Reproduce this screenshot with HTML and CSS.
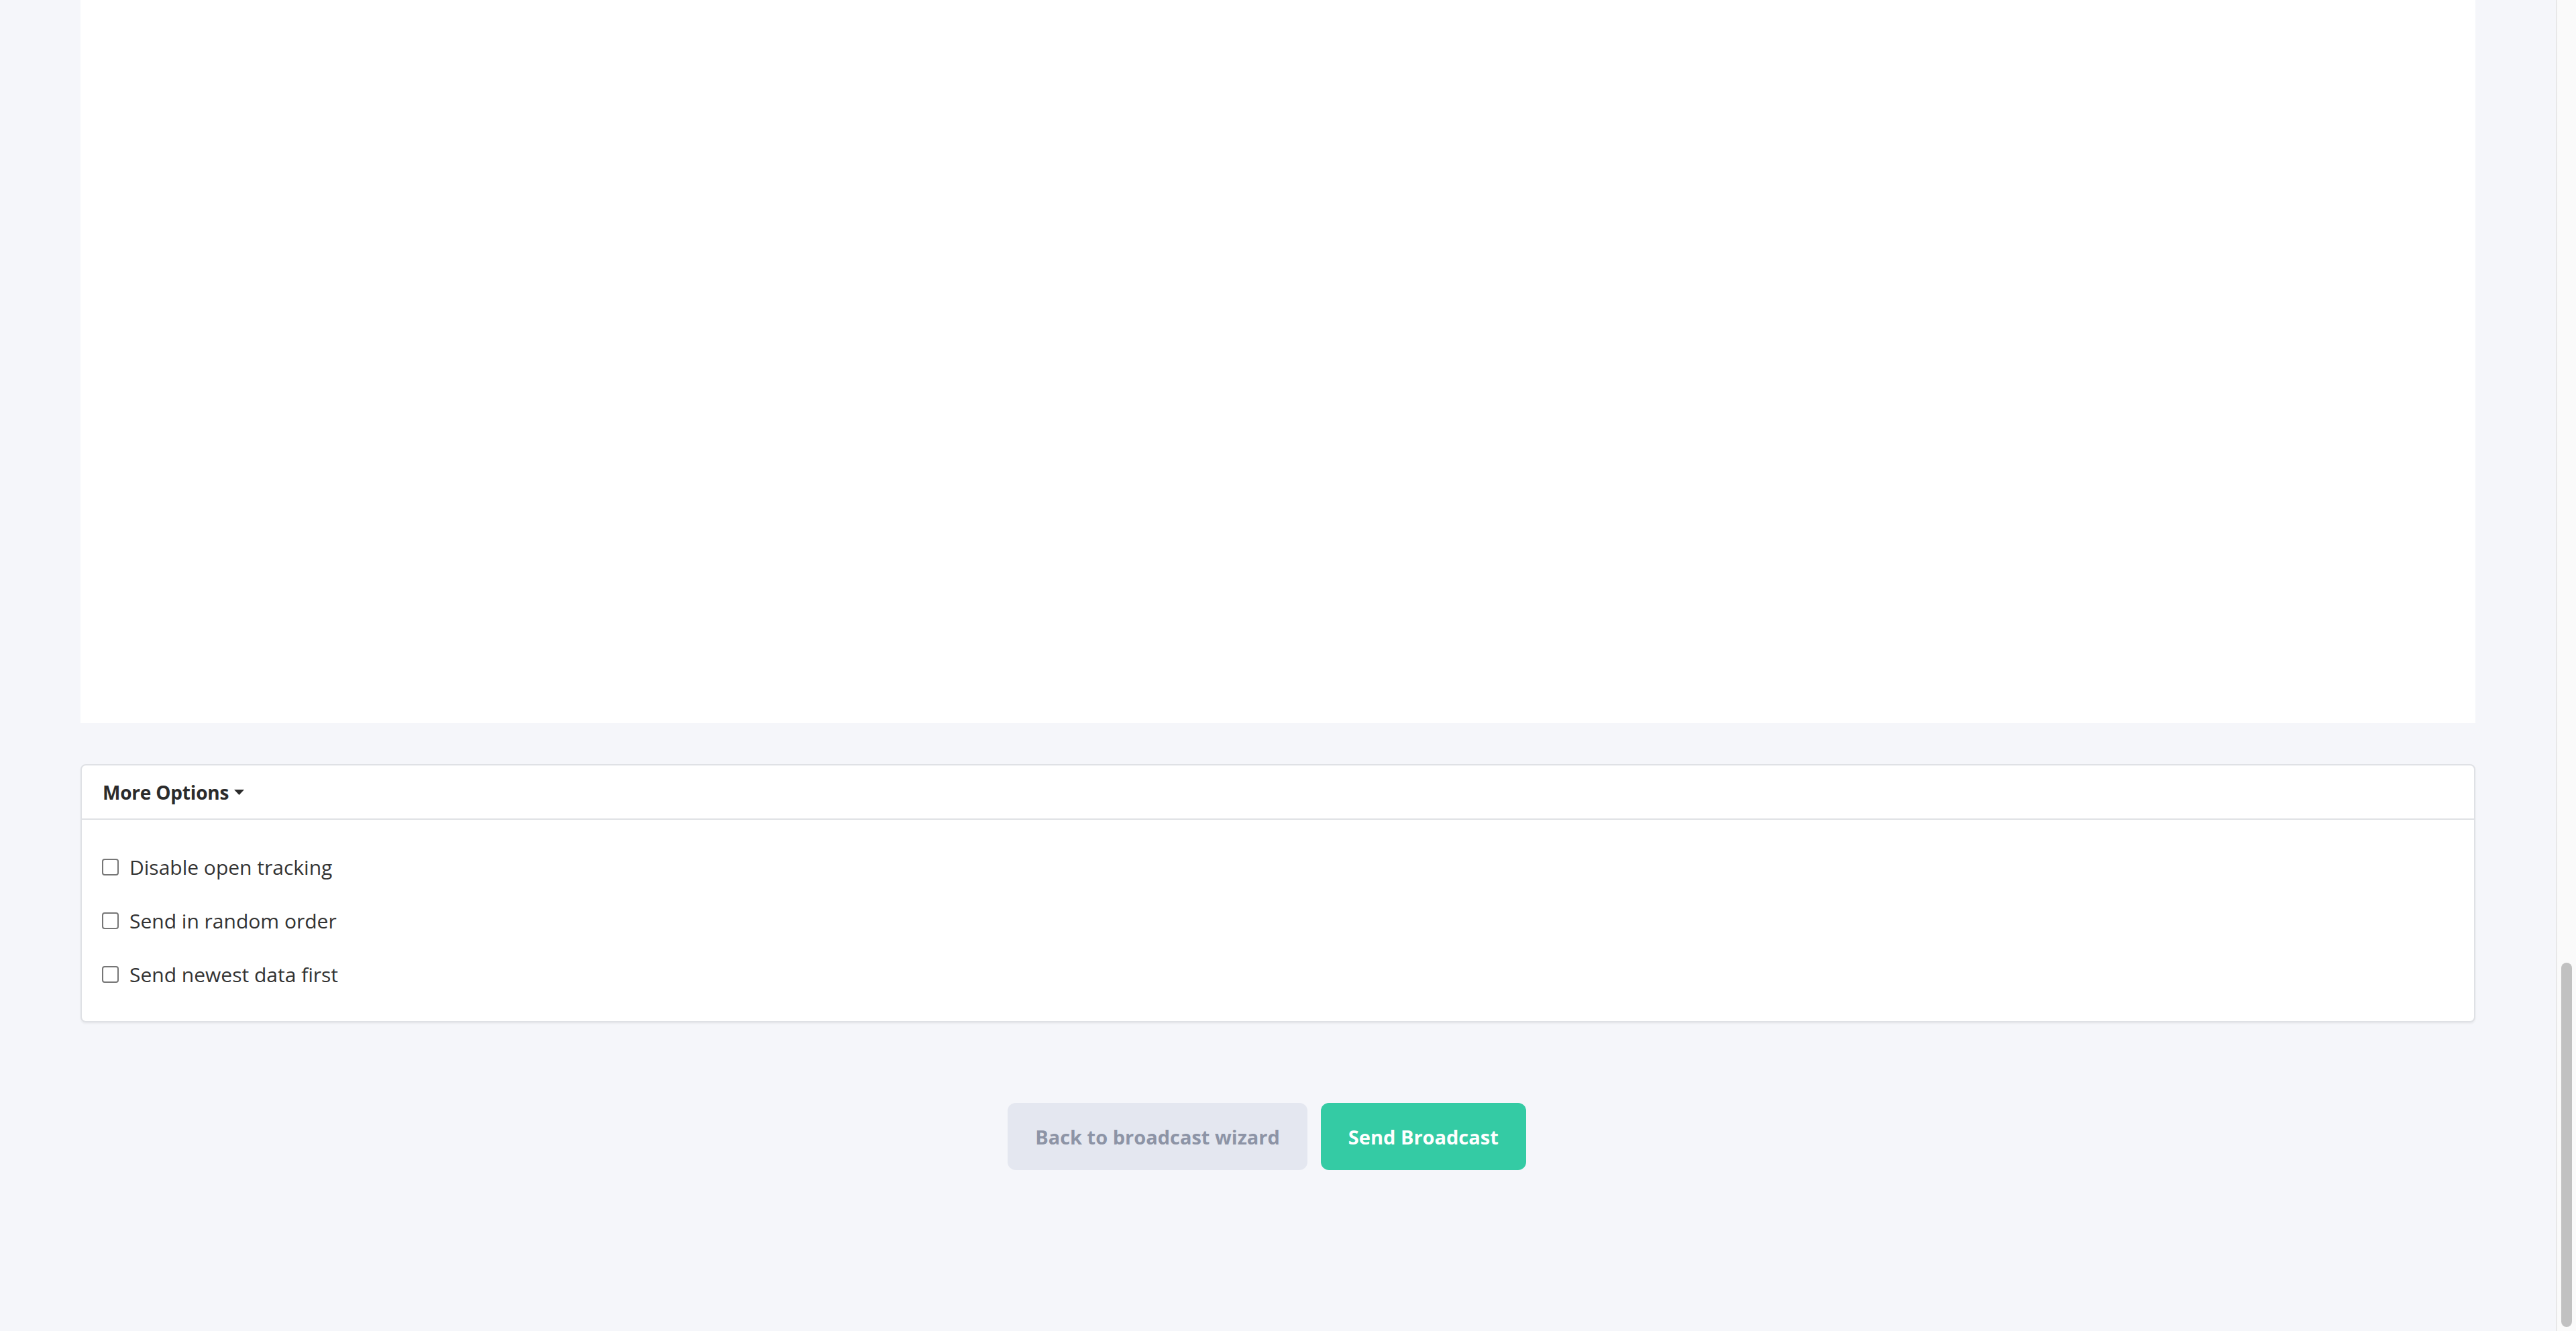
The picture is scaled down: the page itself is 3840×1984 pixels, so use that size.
FILE: index.html
```html
<!DOCTYPE html>
<html lang="en">
<head>
<meta charset="utf-8">
<title>Broadcast review</title>
<link rel="stylesheet" href="styles.css">
</head>
<body>
<div class="viewport">
  <main class="content">
    <section class="panel"></section>
    <section class="card">
      <div class="card-header">
        <span class="card-title">More Options</span>
        <svg class="caret" width="15" height="8" viewBox="0 0 15 8" aria-hidden="true"><path d="M0 0H15L7.5 8Z" fill="#2b2b2b"/></svg>
      </div>
      <div class="card-body">
        <label class="opt"><input type="checkbox" class="check"><span>Disable open tracking</span></label>
        <label class="opt"><input type="checkbox" class="check"><span>Send in random order</span></label>
        <label class="opt"><input type="checkbox" class="check"><span>Send newest data first</span></label>
      </div>
    </section>
    <div class="actions">
      <button class="btn btn-back" type="button">Back to broadcast wizard</button>
      <button class="btn btn-send" type="button">Send Broadcast</button>
    </div>
  </main>
  <div class="scrollbar"><div class="thumb"></div></div>
</div>
</body>
</html>
```
FILE: styles.css
```css
html, body {
  margin: 0;
  padding: 0;
  height: 1984px;
  overflow: hidden;
  background: #f5f6fa;
  font-family: "Open Sans", "Liberation Sans", sans-serif;
  color: #2f2f2f;
}

.viewport {
  display: flex;
  height: 1984px;
}

.content {
  flex: 1;
  padding: 0 120px;
  display: flex;
  flex-direction: column;
}

.panel {
  height: 1078px;
  background: #ffffff;
  margin-bottom: 61px;
}

.card {
  background: #ffffff;
  border: 2px solid #dfe1e5;
  border-radius: 8px;
  box-shadow: 0 2px 3px rgba(0, 0, 0, 0.05);
}

.card-header {
  height: 79px;
  border-bottom: 2px solid #dfe1e5;
  display: flex;
  align-items: center;
  padding: 0 31px;
  gap: 8px;
}

.card-title {
  font-size: 28px;
  font-weight: 700;
  color: #2b2b2b;
  letter-spacing: -0.2px;
}

.caret {
  display: block;
}

.card-body {
  padding: 30px 30px;
}

.opt {
  height: 80px;
  display: flex;
  align-items: center;
  gap: 16px;
  font-size: 30px;
  color: #333333;
}

.check {
  -webkit-appearance: none;
  appearance: none;
  margin: 0;
  width: 25px;
  height: 25px;
  border: 2px solid #767676;
  border-radius: 4px;
  background: #ffffff;
  box-sizing: border-box;
}

.actions {
  margin-top: 120px;
  display: flex;
  justify-content: center;
  gap: 20px;
  padding-right: 33px;
}

.btn {
  height: 100px;
  padding: 0 41px;
  border: 0;
  border-radius: 12px;
  font-family: "Open Sans", "Liberation Sans", sans-serif;
  font-size: 29px;
  font-weight: 700;
  cursor: pointer;
}

.btn-back {
  background: #e4e7f0;
  color: #8d94a6;
}

.btn-send {
  background: #34cba4;
  color: #ffffff;
}

.scrollbar {
  width: 30px;
  box-sizing: border-box;
  border-left: 2px solid #e8e8e8;
  background: #fafafa;
  padding-top: 1435px;
  padding-left: 6px;
}

.thumb {
  width: 16px;
  height: 543px;
  border-radius: 8px;
  background: #c1c1c1;
}
```
